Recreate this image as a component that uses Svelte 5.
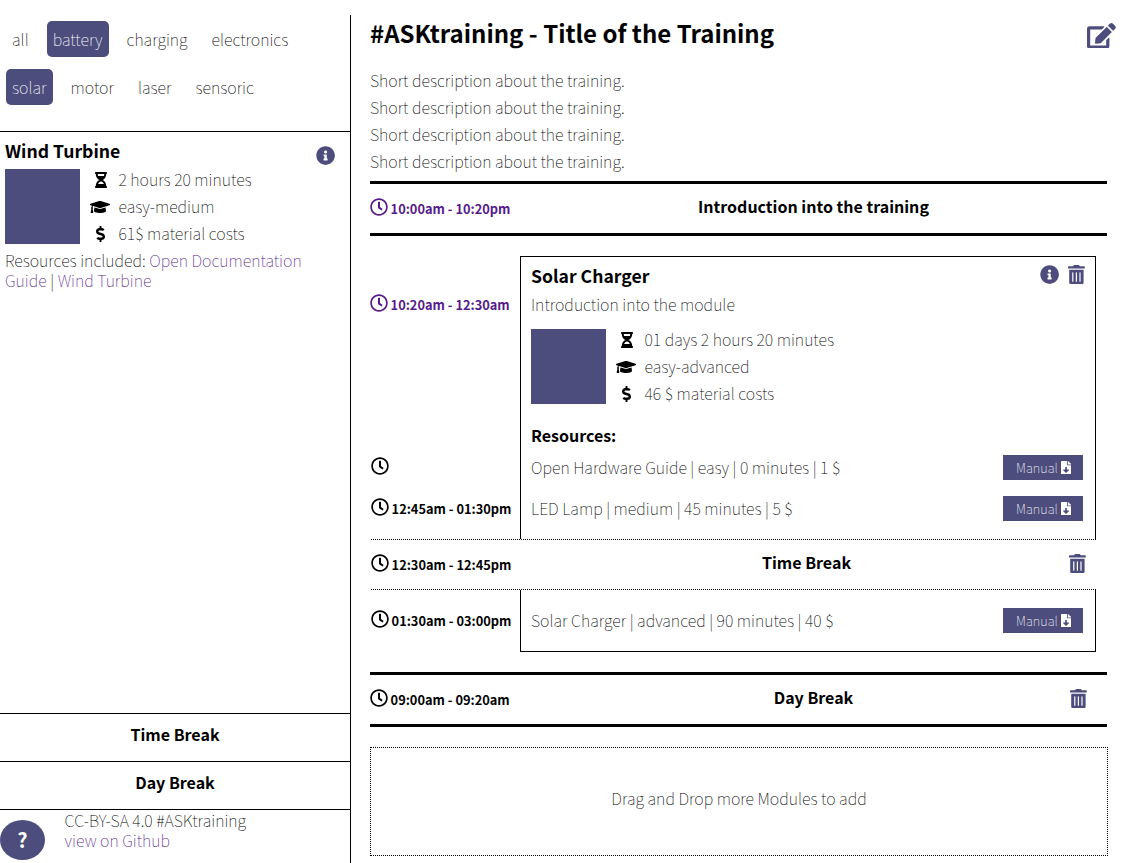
<script>
  const icons = {
    clock: [512, 'M256 8C119 8 8 119 8 256s111 248 248 248 248-111 248-248S393 8 256 8zm0 448c-110.5 0-200-89.5-200-200S145.5 56 256 56s200 89.5 200 200-89.5 200-200 200zm61.8-104.4l-84.9-61.7c-3.1-2.3-4.9-5.9-4.9-9.7V116c0-6.6 5.4-12 12-12h32c6.6 0 12 5.4 12 12v141.7l66.8 48.6c5.4 3.9 6.5 11.4 2.6 16.8L334.6 349c-3.9 5.3-11.4 6.5-16.8 2.6z'],
    info: [512, 'M256 8C119.043 8 8 119.083 8 256c0 136.997 111.043 248 248 248s248-111.003 248-248C504 119.083 392.957 8 256 8zm0 110c23.196 0 42 18.804 42 42s-18.804 42-42 42-42-18.804-42-42 18.804-42 42-42zm56 254c0 6.627-5.373 12-12 12h-88c-6.627 0-12-5.373-12-12v-24c0-6.627 5.373-12 12-12h12v-64h-12c-6.627 0-12-5.373-12-12v-24c0-6.627 5.373-12 12-12h64c6.627 0 12 5.373 12 12v100h12c6.627 0 12 5.373 12 12v24z'],
    trash: [448, 'M32 464a48 48 0 0 0 48 48h288a48 48 0 0 0 48-48V128H32zm272-256a16 16 0 0 1 32 0v224a16 16 0 0 1-32 0zm-96 0a16 16 0 0 1 32 0v224a16 16 0 0 1-32 0zm-96 0a16 16 0 0 1 32 0v224a16 16 0 0 1-32 0zM432 32H312l-9.4-18.7A24 24 0 0 0 281.1 0H166.8a23.72 23.72 0 0 0-21.4 13.3L136 32H16A16 16 0 0 0 0 48v32a16 16 0 0 0 16 16h416a16 16 0 0 0 16-16V48a16 16 0 0 0-16-16z'],
    edit: [576, 'M402.6 83.2l90.2 90.2c3.8 3.8 3.8 10 0 13.8L274.4 405.6l-92.8 10.3c-12.4 1.4-22.9-9.1-21.5-21.5l10.3-92.8L388.8 83.2c3.8-3.8 10-3.8 13.8 0zm162-22.9l-48.8-48.8c-15.2-15.2-39.9-15.2-55.2 0l-35.4 35.4c-3.8 3.8-3.8 10 0 13.8l90.2 90.2c3.8 3.8 10 3.8 13.8 0l35.4-35.4c15.2-15.3 15.2-40 0-55.2zM384 346.2V448H64V128h229.8c3.2 0 6.2-1.3 8.5-3.5l40-40c7.6-7.6 2.2-20.5-8.5-20.5H48C21.5 64 0 85.5 0 112v352c0 26.5 21.5 48 48 48h352c26.5 0 48-21.5 48-48V306.2c0-10.7-12.9-16-20.5-8.5l-40 40c-2.2 2.3-3.5 5.3-3.5 8.5z'],
    cap: [640, 'M622.34 153.2L343.4 67.5c-15.2-4.67-31.6-4.67-46.79 0L17.66 153.2c-23.54 7.23-23.54 38.36 0 45.59l48.63 14.94c-10.67 13.19-17.23 29.28-17.88 46.9C38.78 266.15 32 276.11 32 288c0 10.78 5.68 19.85 13.86 25.65L20.33 428.53C18.11 438.52 25.71 448 35.94 448h56.11c10.24 0 17.84-9.48 15.62-19.47L82.14 313.65C90.32 307.85 96 298.78 96 288c0-11.57-6.47-21.25-15.66-26.87.76-15.02 8.44-28.3 20.69-36.72L296.6 284.5c9.06 2.78 26.44 6.25 46.79 0l278.95-85.7c23.55-7.24 23.55-38.36 0-45.6zM352.79 315.09c-28.53 8.76-52.84 3.92-65.59 0l-145.02-44.55L128 384c0 35.35 85.96 64 192 64s192-28.65 192-64l-14.18-113.47-145.03 44.56z'],
    dollar: [288, 'M209.2 233.4l-108-31.6C88.7 198.2 80 186.5 80 173.5c0-16.3 13.2-29.5 29.5-29.5h66.3c12.2 0 24.2 3.7 34.2 10.5 6.1 4.1 14.3 3.1 19.5-2l34.8-34c7.1-6.9 6.1-18.4-1.8-24.5C238 74.8 207.4 64.1 176 64V16c0-8.8-7.2-16-16-16h-32c-8.8 0-16 7.2-16 16v48h-2.5C45.8 64-5.4 118.7.5 183.6c4.2 46.1 39.4 83.6 83.8 96.6l102.5 30c12.5 3.7 21.2 15.3 21.2 28.3 0 16.3-13.2 29.5-29.5 29.5h-66.3C100 368 88 364.3 78 357.5c-6.1-4.1-14.3-3.1-19.5 2l-34.8 34c-7.1 6.9-6.1 18.4 1.8 24.5 24.5 19.2 55.1 29.9 86.5 30v48c0 8.8 7.2 16 16 16h32c8.8 0 16-7.2 16-16v-48.2c46.6-.9 90.3-28.6 105.7-72.7 21.5-61.6-14.6-124.8-72.5-141.7z'],
    hourglass: [384, 'M360 0H24C10.745 0 0 10.745 0 24v16c0 13.255 10.745 24 24 24 0 90.965 51.016 167.734 120.842 192C75.016 280.266 24 357.035 24 448c-13.255 0-24 10.745-24 24v16c0 13.255 10.745 24 24 24h336c13.255 0 24-10.745 24-24v-16c0-13.255-10.745-24-24-24 0-90.965-51.016-167.734-120.842-192C308.984 231.734 360 154.965 360 64c13.255 0 24-10.745 24-24V24c0-13.255-10.745-24-24-24zm-75.078 384H99.08c17.059-46.797 52.096-80 92.92-80 40.821 0 75.862 33.196 92.922 80zm.019-256H99.078C91.988 108.548 88 86.748 88 64h208c0 22.805-3.987 44.587-11.059 64z'],
    file: [384, 'M224 136V0H24C10.7 0 0 10.7 0 24v464c0 13.3 10.7 24 24 24h336c13.3 0 24-10.7 24-24V160H248c-13.2 0-24-10.8-24-24zm76.45 211.36l-96.42 95.7c-6.65 6.61-17.39 6.61-24.04 0l-96.42-95.7C73.42 337.29 80.54 320 94.82 320H160v-80c0-8.84 7.16-16 16-16h32c8.84 0 16 7.16 16 16v80h65.18c14.28 0 21.4 17.29 11.27 27.36zM377 105L279.1 7c-4.5-4.5-10.6-7-17-7H256v128h128v-6.1c0-6.3-2.5-12.4-7-16.9z']
  };
  const filters = [
    [['all', false], ['battery', true], ['charging', false], ['electronics', false]],
    [['solar', true], ['motor', false], ['laser', false], ['sensoric', false]]
  ];
  const windFacts = [['hourglass', '2 hours 20 minutes'], ['cap', 'easy-medium'], ['dollar', '61$ material costs']];
  const solarFacts = [['hourglass', '01 days 2 hours 20 minutes'], ['cap', 'easy-advanced'], ['dollar', '46 $ material costs']];
</script>

{#snippet icon(name, size)}
  <svg class="icon" viewBox="0 0 {icons[name][0]} 512" height={size} width={(size * icons[name][0]) / 512} aria-hidden="true">
    <path fill="currentColor" d={icons[name][1]} />
  </svg>
{/snippet}

{#snippet time(label)}
  <div class="time">{@render icon('clock', 18)}<b>{label}</b></div>
{/snippet}

{#snippet facts(list)}
  <div class="facts">
    <div class="thumb"></div>
    <ul>
      {#each list as [name, text]}
        <li><span class="fact-icon {name}">{@render icon(name, 16)}</span>{text}</li>
      {/each}
    </ul>
  </div>
{/snippet}

{#snippet resource(text)}
  <span class="resource">{text}</span>
  <button class="manual">Manual {@render icon('file', 13.5)}</button>
{/snippet}

<div class="page">
  <aside>
    <nav>
      {#each filters as row}
        <div class="filter-row">
          {#each row as [name, active]}
            <span class="filter" class:active>{name}</span>
          {/each}
        </div>
      {/each}
    </nav>
    <section class="module">
      <header>
        <h2>Wind Turbine</h2>
        <span class="accent info">{@render icon('info', 19.2)}</span>
      </header>
      {@render facts(windFacts)}
      <p>Resources included: <a href="#doc">Open Documentation Guide</a> | <a href="#wind">Wind Turbine</a></p>
    </section>
    <div class="break-item">Time Break</div>
    <div class="break-item">Day Break</div>
    <footer>
      <span class="help">?</span>
      <div class="licence">CC-BY-SA 4.0 #ASKtraining<br /><a href="#github">view on Github</a></div>
    </footer>
  </aside>

  <main>
    <header class="title">
      <h1>#ASKtraining - Title of the Training</h1>
      <span class="accent edit">{@render icon('edit', 25.6)}</span>
    </header>
    <div class="description">
      {#each Array(4) as _}<p>Short description about the training.</p>{/each}
    </div>
    <div class="bar visited">
      {@render time('10:00am - 10:20pm')}
      <h3>Introduction into the training</h3>
    </div>

    <div class="schedule">
      <div class="row">
        <div class="slot first visited">{@render time('10:20am - 12:30am')}</div>
        <div class="card top">
          <header>
            <h2>Solar Charger</h2>
            <span class="actions accent">{@render icon('info', 19.2)}{@render icon('trash', 19.2)}</span>
          </header>
          <p class="intro">Introduction into the module</p>
          {@render facts(solarFacts)}
          <h4>Resources:</h4>
        </div>
      </div>
      <div class="row">
        <div class="slot">{@render time('')}</div>
        <div class="card entry">{@render resource('Open Hardware Guide | easy | 0 minutes | 1 $')}</div>
      </div>
      <div class="row">
        <div class="slot">{@render time('12:45am - 01:30pm')}</div>
        <div class="card entry">{@render resource('LED Lamp | medium | 45 minutes | 5 $')}</div>
      </div>
      <div class="row spacer"><div class="slot"></div><div class="card"></div></div>
      <div class="time-break">
        {@render time('12:30am - 12:45pm')}
        <h3>Time Break</h3>
        <span class="end accent">{@render icon('trash', 19.2)}</span>
      </div>
      <div class="row last">
        <div class="slot">{@render time('01:30am - 03:00pm')}</div>
        <div class="card entry bottom">{@render resource('Solar Charger | advanced | 90 minutes | 40 $')}</div>
      </div>
    </div>

    <div class="bar">
      {@render time('09:00am - 09:20am')}
      <h3>Day Break</h3>
      <span class="end accent">{@render icon('trash', 19.2)}</span>
    </div>
    <div class="drop">Drag and Drop more Modules to add</div>
  </main>
</div>

<style>
  :global(body) { background: #fff; }
  .page, .page * { box-sizing: border-box; }
  .page {
    display: flex;
    height: 863px;
    padding-top: 15px;
    overflow: hidden;
    font: 100 16px/20px "Noto Sans CJK SC", "Noto Sans CJK JP", sans-serif;
    color: #000;
  }
  h1, h2, h3, h4, p, ul { margin: 0; padding: 0; }
  h1, h2, h3, h4, b { font-weight: 700; }
  h2 { font-size: 17.6px; line-height: 26px; }
  h3, h4 { font-size: 16px; line-height: 24px; }
  a { color: #551a8b; text-decoration: none; }
  .icon { display: block; flex: none; }
  .accent { color: #4c4d7d; }

  aside {
    width: 351px;
    flex: none;
    display: flex;
    flex-direction: column;
    border-right: 1px solid #000;
  }
  nav {
    display: flex;
    flex-direction: column;
    gap: 12px;
    height: 117px;
    padding: 6px;
    border-bottom: 1px solid #000;
  }
  .filter-row { display: flex; gap: 12px; }
  .filter { padding: 8px 6px; border-radius: 5px; height: 36px; line-height: 21px; }
  .active { background: #4c4d7d; color: #fff; }
  .module { flex: 1; padding: 6px 5px; }
  .module header { display: flex; justify-content: space-between; height: 31px; }
  .info { padding: 8.4px 10px 0 0; }
  .module p { padding-top: 6px; }
  .facts { display: flex; height: 75px; }
  .thumb { width: 75px; height: 75px; background: #4c4d7d; }
  ul { list-style: none; margin-top: -3px; }
  li { display: flex; align-items: center; height: 27px; line-height: 26px; padding-bottom: 1px; }
  .fact-icon { width: 38px; margin: 0 -0.5px 0 1px; padding-top: 2px; display: flex; justify-content: center; }
  .hourglass { padding-left: 2px; }
  .break-item {
    height: 48px;
    border-top: 1px solid #000;
    text-align: center;
    font-weight: 700;
    line-height: 41px;
  }
  footer { display: flex; height: 54px; border-top: 1px solid #000; }
  .help {
    width: 45px;
    height: 40px;
    margin: 10px 20px 0 0;
    border-radius: 50%;
    background: #4c4d7d;
    color: #fff;
    font-weight: 700;
    font-size: 20px;
    line-height: 40px;
    text-align: center;
  }
  .licence { margin-left: -0.4px; }

  main { flex: 1; padding-left: 19px; }
  .title { display: flex; justify-content: space-between; height: 52px; }
  h1 { font-size: 24px; line-height: 36px; }
  .edit { padding: 7.5px 7.5px 0 0; }
  .description { height: 114px; line-height: 27px; }
  .bar {
    display: flex;
    align-items: center;
    width: 737px;
    height: 55px;
    padding-bottom: 2px;
    border: solid #000;
    border-width: 3px 0;
  }
  .time { width: 150px; height: 23px; flex: none; display: flex; align-items: flex-start; gap: 2.6px; }
  .time .icon, .time :global(svg) { margin-top: 2px; }
  .time b { font-size: 12.8px; line-height: 20px; padding-top: 3px; white-space: nowrap; }
  .visited .time { color: #551a8b; }
  .bar h3 { flex: 1; text-align: center; padding-bottom: 3px; }
  .time-break h3 { flex: 1; text-align: center; padding: 0 2px 4px 0; }
  .end { width: 0; display: flex; justify-content: flex-end; }
  .bar .end { margin-left: -20px; margin-right: 20px; }

  .schedule { width: 726px; margin: 20px 0; }
  .row { display: flex; height: 41px; }
  .row:first-child { height: 192px; }
  .slot { width: 150px; padding: 7px 0 0 1px; flex: none; }
  .slot.first { padding: 36px 0 0; }
  .card { flex: 1; border: solid #000; border-width: 0 1px; padding: 0 12px 0 10px; }
  .card.top { border-top-width: 1px; padding-top: 6px; }
  .card header { display: flex; justify-content: space-between; height: 27px; }
  .actions { display: flex; gap: 9px; padding-top: 2.2px; }
  .card.top .actions { margin-right: -2px; }
  .intro { line-height: 28px; height: 39px; }
  h4 { padding-top: 19px; }
  .entry { display: flex; align-items: center; justify-content: space-between; }
  .resource { padding-bottom: 4px; }
  .manual {
    width: 80px;
    height: 25px;
    margin-bottom: 2px;
    display: flex;
    align-items: center;
    justify-content: center;
    gap: 3px;
    border: 0;
    padding: 0 0 0 1px;
    background: #4c4d7d;
    color: #fff;
    font: inherit;
    font-size: 12.8px;
  }
  .bottom .manual { margin-bottom: 0; }
  .bottom .resource { padding-bottom: 2px; }
  .spacer { height: 9px; }
  .time-break {
    display: flex;
    align-items: center;
    height: 51px;
    margin-left: 1px;
    padding-bottom: 2px;
    border: dotted #000;
    border-width: 1px 0;
  }
  .time-break .time { width: 148px; }
  .time-break .end { margin-left: -10px; margin-right: 10px; }
  .row.last { height: 62px; }
  .last .slot { padding-top: 18px; }
  .bottom { border-bottom-width: 1px; }
  .drop {
    width: 738px;
    height: 109px;
    margin-top: 20px;
    border: 1px dotted #000;
    text-align: center;
    line-height: 100px;
  }
</style>
